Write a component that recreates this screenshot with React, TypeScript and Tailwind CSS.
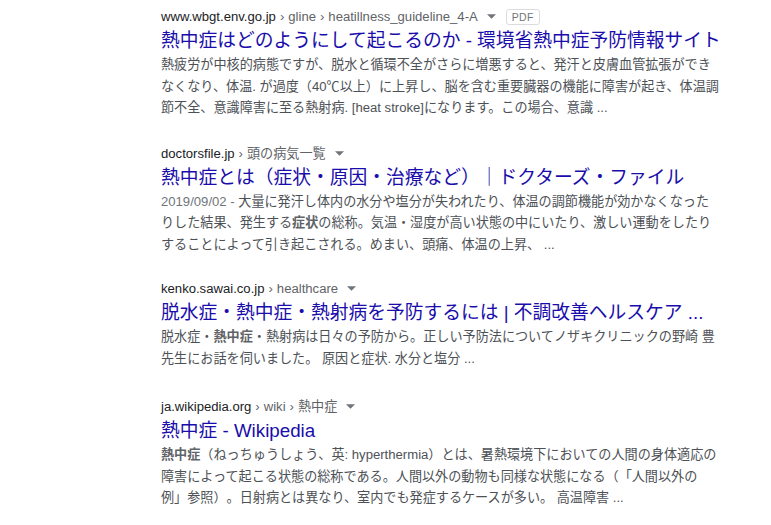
import React from "react";

const latin = { fontFamily: '"Liberation Sans", Arial, "Noto Sans CJK JP", sans-serif' };

function Caret() {
  return (
    <span className="ml-[9px] inline-block align-middle" aria-hidden>
      <svg width="9" height="6" viewBox="0 0 10 6" className="block">
        <path d="M0 0 L10 0 L5 5 Z" fill="#70757a" />
      </svg>
    </span>
  );
}

function Url({ domain, crumbs, pdf }: { domain: string; crumbs: string[]; pdf?: boolean }) {
  return (
    <div className="flex items-center text-[13.125px] leading-[18px] h-[18px] whitespace-nowrap">
      <span className="text-[#202124]">{domain}</span>
      {crumbs.map((c, i) => (
        <span key={i} className="text-[#5f6368]">
          <span className="mx-[4px]">›</span>
          {c}
        </span>
      ))}
      <Caret />
      {pdf && (
        <span className="ml-[10px] border border-[#dadce0] rounded-[3px] px-[5px] text-[10.5px] leading-[14px] text-[#70757a] tracking-wide">
          PDF
        </span>
      )}
    </div>
  );
}

function Result({
  domain,
  crumbs,
  pdf,
  title,
  mb,
  children,
}: {
  domain: string;
  crumbs: string[];
  pdf?: boolean;
  title: string;
  mb: string;
  children: React.ReactNode;
}) {
  return (
    <div className={mb}>
      <Url domain={domain} crumbs={crumbs} pdf={pdf} />
      <h3 className="text-[18.75px] leading-[24px] text-[#1a0dab] mt-[3px] whitespace-nowrap [text-spacing-trim:space-all]">
        {title}
      </h3>
      <div className="mt-[1px] text-[13.125px] leading-[21.5px] text-[#4d5156] w-[560px] [text-spacing-trim:space-all]">
        {children}
      </div>
    </div>
  );
}

export default function App() {
  return (
    <div className="w-[771px] h-[525px] bg-white overflow-hidden" style={latin}>
      <div className="pl-[161px] pt-[8px]">
        <Result
          domain="www.wbgt.env.go.jp"
          crumbs={["gline", "heatillness_guideline_4-A"]}
          pdf
          mb="mb-[26px]"
          title="熱中症はどのようにして起こるのか - 環境省熱中症予防情報サイト"
        >
          熱疲労が中核的病態ですが、脱水と循環不全がさらに増悪すると、発汗と皮膚血管拡張ができなくなり、体温. が過度（40℃以上）に上昇し、脳を含む重要臓器の機能に障害が起き、体温調節不全、意識障害に至る熱射病. [heat stroke]になります。この場合、意識 ...
        </Result>
        <Result
          domain="doctorsfile.jp"
          crumbs={["頭の病気一覧"]}
          mb="mb-[25px]"
          title="熱中症とは（症状・原因・治療など）｜ドクターズ・ファイル"
        >
          <span className="text-[#70757a]">2019/09/02 - </span>
          大量に発汗し体内の水分や塩分が失われたり、体温の調節機能が効かなくなったりした結果、発生する<b className="font-bold text-[#5f6368]">症状</b>の総称。気温・湿度が高い状態の中にいたり、激しい運動をしたりすることによって引き起こされる。めまい、頭痛、体温の上昇、 ...
        </Result>
        <Result
          domain="kenko.sawai.co.jp"
          crumbs={["healthcare"]}
          mb="mb-[29px]"
          title="脱水症・熱中症・熱射病を予防するには | 不調改善ヘルスケア ..."
        >
          脱水症・<b className="font-bold text-[#5f6368]">熱中症</b>・熱射病は日々の予防から。正しい予防法についてノザキクリニックの野崎 豊先生にお話を伺いました。 原因と症状. 水分と塩分 ...
        </Result>
        <Result domain="ja.wikipedia.org" crumbs={["wiki", "熱中症"]} mb="mb-[25px]" title="熱中症 - Wikipedia">
          <b className="font-bold text-[#5f6368]">熱中症</b>（ねっちゅうしょう、英: hyperthermia）とは、暑熱環境下においての人間の身体適応の障害によって起こる状態の総称である。人間以外の動物も同様な状態になる（「人間以外の例」参照）。日射病とは異なり、室内でも発症するケースが多い。 高温障害 ...
        </Result>
      </div>
    </div>
  );
}
